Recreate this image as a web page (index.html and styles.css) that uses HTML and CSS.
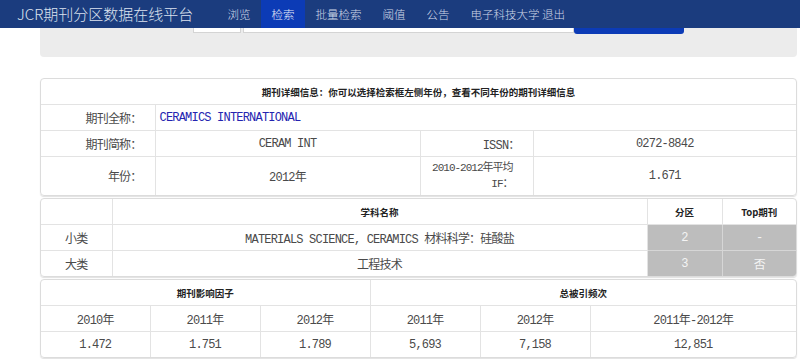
FILE: index.html
```html
<!DOCTYPE html>
<html lang="zh-CN">
<head>
  <meta charset="UTF-8" />
  <title>JCR期刊分区数据在线平台</title>
  <link rel="stylesheet" href="styles.css">
</head>
<body>
  <div class="navbar">
    <div class="brand">JCR期刊分区数据在线平台</div>
    <ul class="nav">
      <li>浏览</li>
      <li class="active">检索</li>
      <li>批量检索</li>
      <li>阈值</li>
      <li>公告</li>
      <li>电子科技大学 退出</li>
    </ul>
  </div>

  <div class="search-panel">
    <div class="search-row">
      <span class="year-select"></span>
      <span class="search-input"></span>
      <span class="search-btn"></span>
    </div>
  </div>

  <div class="content">
    <div class="panel">
      <table class="info">
        <colgroup><col style="width:114px"><col style="width:265px"><col style="width:113px"><col></colgroup>
        <tr><td colspan="4" class="head">期刊详细信息：你可以选择检索框左侧年份，查看不同年份的期刊详细信息</td></tr>
        <tr><td class="label">期刊全称：</td><td colspan="3" class="journal">CERAMICS INTERNATIONAL</td></tr>
        <tr><td class="label">期刊简称：</td><td>CERAM INT</td><td class="label">ISSN：</td><td>0272-8842</td></tr>
        <tr class="tall"><td class="label">年份：</td><td>2012年</td><td class="label if">2010-2012年平均<br>IF：</td><td>1.671</td></tr>
      </table>
    </div>

    <div class="panel">
      <table class="subjects">
        <colgroup><col style="width:71px"><col style="width:535px"><col style="width:75px"><col></colgroup>
        <tr><td></td><td class="head">学科名称</td><td class="head">分区</td><td class="head">Top期刊</td></tr>
        <tr><td>小类</td><td>MATERIALS SCIENCE, CERAMICS 材料科学：硅酸盐</td><td class="zone">2</td><td class="zone">-</td></tr>
        <tr><td>大类</td><td>工程技术</td><td class="zone">3</td><td class="zone">否</td></tr>
      </table>
    </div>

    <div class="panel">
      <table class="metrics">
        <colgroup><col style="width:109px"><col style="width:110px"><col style="width:110px"><col style="width:110px"><col style="width:110px"><col></colgroup>
        <tr><td colspan="3" class="head">期刊影响因子</td><td colspan="3" class="head">总被引频次</td></tr>
        <tr><td>2010年</td><td>2011年</td><td>2012年</td><td>2011年</td><td>2012年</td><td>2011年-2012年</td></tr>
        <tr><td>1.472</td><td>1.751</td><td>1.789</td><td>5,693</td><td>7,158</td><td>12,851</td></tr>
      </table>
    </div>
  </div>
</body>
</html>
```

FILE: styles.css
```css
body {
  margin: 0;
  background: #fff;
  color: #444;
  font-family: "Liberation Mono", "Noto Sans CJK SC", monospace;
  font-size: 12px;
}

.navbar {
  display: flex;
  height: 28px;
  padding-left: 17px;
  background: #1b3c7e;
  font-family: "Noto Sans CJK SC", sans-serif;
  color: #dde3ef;
}
.brand {
  width: 200px;
  font-size: 15px;
  line-height: 28px;
  font-weight: 300;
}
.nav {
  display: flex;
  margin: 0;
  padding: 0;
  list-style: none;
}
.nav li {
  padding: 0 10.5px;
  font-size: 11.5px;
  line-height: 28px;
  font-weight: 300;
  color: #cfd7e8;
}
.nav li.active {
  background: #0c3bb6;
  color: #e6ecf8;
}

.search-panel {
  height: 29px;
  margin: 0 3px 0 40px;
  background: #ececec;
  border-radius: 0 0 4px 4px;
}
.search-row {
  display: flex;
  padding-left: 153px;
}
.year-select {
  width: 46px;
  height: 4px;
  background: #fff;
  border: 1px solid #d4d4d4;
  border-top: 0;
}
.search-input {
  width: 329px;
  height: 4px;
  margin-left: 2px;
  background: #fff;
  border: 1px solid #d4d4d4;
  border-top: 0;
}
.search-btn {
  width: 110px;
  height: 6px;
  background: #0c3bb6;
  border-radius: 0 0 3px 3px;
}

.content {
  margin: 21px 3px 0 40px;
}
.panel {
  margin-bottom: 2px;
  border: 1px solid #dcdcdc;
  border-radius: 4px;
  overflow: hidden;
  box-shadow: 0 1px 1px rgba(0, 0, 0, 0.12);
}
table {
  width: 100%;
  border-collapse: collapse;
  table-layout: fixed;
}
td {
  height: 25px;
  padding: 0 4px;
  border: 1px solid #e3e3e3;
  text-align: center;
  letter-spacing: -0.8px;
  color: #4a4a4a;
}
tr:first-child td { border-top: 0; }
tr:last-child td { border-bottom: 0; }
td:first-child { border-left: 0; }
td:last-child { border-right: 0; }

td.head {
  font-family: "Noto Sans CJK SC", sans-serif;
  font-size: 9.5px;
  font-weight: bold;
  letter-spacing: 0;
  color: #222;
}
td.label {
  text-align: right;
  padding-right: 13px;
}
td.if {
  padding-right: 20px;
  font-size: 11px;
  line-height: 16px;
  letter-spacing: -1px;
  white-space: nowrap;
}
td.journal {
  text-align: left;
  color: #2424b0;
}
tr.tall td {
  height: 38px;
}

.subjects td.zone {
  background: #bdbdbd;
  color: #f4f4f4;
  border-color: #d6d6d6;
}
```
